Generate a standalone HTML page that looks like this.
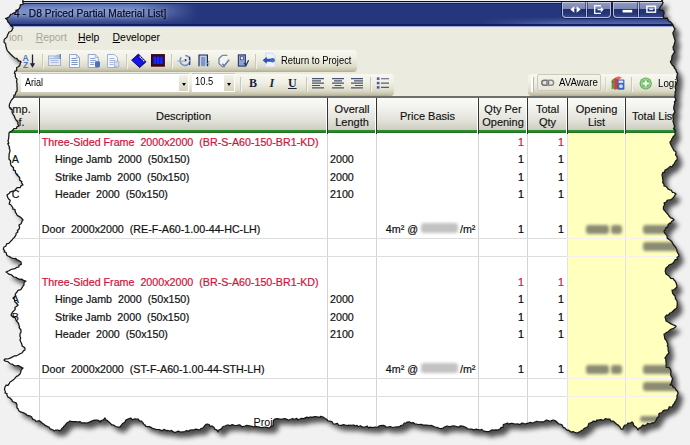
<!DOCTYPE html>
<html><head><meta charset="utf-8"><title>D8 Priced Partial Material List</title>
<style>
html,body{margin:0;padding:0}
body{width:690px;height:445px;overflow:hidden;background:#f1f1f1;position:relative;font-family:"Liberation Sans",Arial,sans-serif;color:#000}
#shadow,#edge{position:absolute;left:0;top:0;width:690px;height:445px;pointer-events:none}
#win{position:absolute;left:0;top:0;width:690px;height:445px;overflow:hidden;background:#fff;clip-path:polygon(23px 0px,22.7px 2.1px,23.5px 4px,21.7px 4.5px,20.5px 4.5px,20.3px 5.6px,19.5px 8.5px,17.0px 10.3px,16.0px 10.2px,16.0px 11.7px,14.2px 12.9px,12px 14px,10.7px 14.4px,9.0px 17.0px,7.2px 17.9px,5.5px 18.5px,7.1px 19.4px,8px 22px,9.5px 23.5px,9.6px 23.7px,11px 26px,12.7px 26.9px,13px 28px,12.1px 30.1px,10.8px 31.5px,9px 32px,7.8px 34.6px,6.9px 36.9px,6.8px 37.2px,4.3px 39.4px,4px 42px,5.7px 43.9px,5.8px 45.6px,6.3px 47.8px,7px 50px,8.3px 51.8px,10.4px 54.0px,12.2px 55.7px,14.1px 57.4px,15px 58px,16.8px 58.3px,18.7px 60.9px,20.3px 61.1px,21px 62px,20.4px 63.1px,19.7px 65.5px,18px 67px,16.6px 67.5px,16.7px 70.6px,15px 71px,14.4px 73.4px,15.3px 73.8px,15.3px 76.8px,16px 78px,17.0px 79.1px,16.5px 82px,17.0px 83.1px,17px 86px,17.1px 87.7px,17.1px 91.0px,16px 92px,15.2px 95.0px,14.0px 95.2px,13.5px 98px,12.7px 98.6px,10.9px 100.8px,10.7px 101.8px,9.5px 104px,9.2px 106.7px,10.4px 108.9px,12.2px 109.8px,12px 112px,12.9px 114.0px,14.3px 116.2px,15.1px 118.2px,16px 120px,17.9px 122.0px,17.9px 124.4px,19px 126px,16.8px 126.8px,16.6px 128.4px,14.1px 128.5px,12.2px 130.8px,9.7px 132.1px,9px 133px,9.0px 134.1px,8.8px 136.9px,8.6px 138.7px,8px 141px,8.8px 143.3px,7.8px 143.7px,9.6px 147.3px,9.1px 148.1px,10px 150px,9.9px 151.6px,9.2px 153.6px,9.0px 156.2px,9px 158px,9.1px 159.5px,10.5px 160.6px,10.6px 163.7px,11px 165px,11.6px 166.1px,13.6px 167.8px,13.4px 169.9px,15.4px 170.9px,15.6px 173.0px,17px 175px,18.7px 176.5px,19.7px 177.7px,19.7px 180.3px,21.8px 181.6px,21.5px 182.6px,23px 185px,21.3px 185.4px,20.1px 187.7px,17.1px 187.6px,16px 189px,14.8px 190.5px,13.0px 191.1px,9.9px 192.2px,9.4px 193.3px,7px 195px,7.5px 196.8px,8.4px 198.8px,10.2px 200.3px,9.2px 203.9px,11px 205px,12.8px 207.6px,12.9px 209.2px,14.9px 209.4px,15.5px 212.3px,16.3px 213.4px,17px 215px,18.1px 215.9px,19.5px 216.6px,21.7px 218.3px,23px 220px,22.3px 220.8px,21.1px 223.7px,19px 225px,19.6px 227.5px,19.3px 228.7px,17.3px 230.7px,18px 232px,16.1px 233.2px,15.9px 235.2px,14.2px 237.7px,13.4px 238.1px,12px 240px,9.9px 242.1px,8.8px 243.4px,6.9px 243.6px,5.7px 246.2px,4px 247px,3.3px 249.3px,4.8px 250.9px,4px 252px,6.0px 252.3px,6.9px 255.4px,8px 256px,9.0px 256.4px,11.3px 257.8px,13.4px 258.5px,16.0px 258.4px,16.4px 259.5px,18.4px 260.3px,21px 262px,21.3px 264.4px,18.8px 265.3px,19px 267px,16.8px 267.3px,15.0px 268.7px,13.6px 268.9px,11.0px 269.5px,9.0px 270.7px,8.3px 271.0px,6px 272px,6.8px 272.4px,8.9px 274.2px,11.4px 274.8px,13.0px 276.2px,14px 277px,15.9px 277.4px,18.0px 278.7px,19.8px 279.4px,21.9px 279.2px,24.1px 280.7px,26px 281px,24.1px 282.5px,23.9px 285.1px,23px 286px,22.4px 287.2px,20.8px 289.6px,18.0px 290.4px,17px 292px,15.2px 294.1px,15.3px 295.8px,14.6px 296.8px,13px 298px,14.7px 299.9px,14.7px 301.7px,15.8px 302.5px,18px 305px,17.4px 305.8px,14.9px 307.5px,15.3px 309.4px,12.4px 312.3px,11.4px 314.0px,11px 315px,12.6px 316.9px,14.4px 317.7px,15.3px 317.8px,16px 320px,17.5px 322.0px,18.4px 323.2px,19.5px 326.9px,19.1px 327.6px,21px 330px,20.9px 332.7px,20.1px 333.4px,19.9px 336.2px,20.7px 337.8px,20px 340px,20.7px 341.8px,21.7px 343.8px,22.2px 346.0px,24.9px 347.8px,25px 350px,23.7px 350.6px,21.9px 353.0px,20.1px 353.8px,18px 355px,16.0px 356.0px,14.8px 355.7px,11.2px 357.6px,10.8px 357.9px,7.9px 359.0px,5.4px 358.8px,4px 360px,5.4px 361.2px,7.6px 361.5px,10.4px 363.9px,12px 364px,13.4px 365.1px,15.5px 366.0px,17.7px 365.5px,18.8px 365.7px,21.1px 367.1px,23px 368px,21.3px 369.7px,20.6px 372.5px,20px 374px,17.8px 376.0px,17px 376px,15.6px 377.4px,14.1px 379.1px,13.4px 379.7px,11.4px 381.2px,10px 382px,9.5px 383.1px,8.0px 385.4px,6.2px 385.2px,5px 387px,4.5px 389.4px,5.4px 391.9px,5px 393px,7.0px 393.7px,6.9px 395.0px,8.1px 397.2px,10px 398px,12.1px 400.2px,12.3px 401.5px,13.8px 402.0px,16.1px 402.8px,17px 405px,16.9px 407.7px,17.9px 408.7px,19px 411px,20.9px 412.1px,21.5px 412.2px,24.1px 413.2px,26px 414px,27.2px 415.4px,30.5px 416.2px,31.5px 416.8px,32.7px 419.1px,35px 420px,36.0px 421.5px,39.3px 420.7px,41.1px 422.0px,42px 423px,44.3px 424.5px,45.1px 425.4px,47.6px 426.6px,49px 427px,50.2px 428.8px,53.3px 430.0px,54px 431px,55.8px 430.0px,57.5px 430.2px,59.7px 430.6px,61px 430px,62.1px 428.0px,63.3px 427.6px,64px 426px,64.9px 425.5px,67.3px 422.7px,69.4px 421.5px,70px 421px,71.7px 421.7px,74.2px 421.6px,76.3px 421.7px,78px 422px,79.9px 421.6px,81.6px 422.9px,85.3px 422.8px,87px 423px,89.5px 422.1px,90.5px 421.6px,93.7px 420.3px,95.0px 420.1px,97px 420px,99.0px 420.7px,100px 422px,101.3px 420.5px,103.4px 419.9px,105px 418px,106.1px 420.1px,107.0px 420.3px,108.4px 421.4px,111.2px 424.1px,112px 425px,113.4px 424.9px,115.8px 426.5px,118.6px 427.0px,120px 427px,121.8px 424.7px,123.0px 423.2px,124.9px 422.3px,125.8px 420.1px,128px 419px,130.6px 418.1px,132.6px 419.8px,134.9px 418.8px,136.1px 419.2px,138px 419px,139.7px 421.2px,141.2px 421.0px,142.9px 422.6px,143.8px 424.3px,145px 425px,146.0px 426.3px,149.3px 426.6px,151.0px 427.3px,152.4px 428.3px,155px 429px,156.2px 429.3px,159.6px 429.5px,161.6px 430.8px,164.4px 429.4px,166.3px 430.7px,167.0px 430.4px,170px 431px,171.5px 430.4px,174.1px 432.3px,175.6px 432.3px,178.4px 431.1px,180px 432px,182.7px 431.8px,184.9px 431.6px,186.5px 430.5px,188.6px 431.3px,190px 430px,192.7px 429.9px,194.5px 430.0px,195.2px 429.1px,197.2px 429.4px,200px 430px,200.7px 428.8px,203.2px 427.7px,204.0px 426.7px,205.2px 425.1px,207px 424px,209.2px 424.5px,209.7px 426.1px,212px 426px,213.9px 427.2px,214.7px 429.1px,216.7px 429.9px,218px 432px,218.4px 430.2px,221.4px 428.9px,222.1px 427.8px,223.0px 426.5px,225px 426px,226.8px 425.2px,228.1px 425.0px,230.3px 425.7px,232.1px 424.6px,235px 425.5px,236.9px 425.4px,239.4px 424.8px,240.8px 425.6px,242.1px 426.8px,245px 426px,246.7px 425.4px,249.4px 425.8px,252.0px 426.4px,254px 427px,255.2px 426.3px,258.5px 426.9px,260.6px 427.4px,262px 427.6px,264.9px 427.2px,265.5px 427.1px,268.6px 427.9px,270px 427.6px,271.0px 426.0px,272.6px 426px,273.2px 425.1px,273.3px 421.3px,273.4px 420.5px,274.7px 419.2px,277.1px 418.6px,280px 419px,281.1px 419.4px,284.8px 418.6px,286.9px 419.3px,288.6px 420.2px,290px 419.5px,292.9px 418.5px,293.6px 419.5px,296.9px 418.4px,297.6px 419.8px,300px 419px,301.2px 418.4px,303.7px 418.6px,306.9px 417.1px,308.5px 417.9px,310px 417px,312.7px 417.1px,314.8px 416.7px,315.8px 416.5px,318px 417px,320.2px 417.0px,320.9px 416.3px,323px 417px,325.1px 418.5px,326.8px 419.4px,328px 421px,329.7px 421.1px,331.9px 421.5px,333.2px 423.8px,335px 424px,337.4px 423.4px,338.5px 425.1px,341.3px 425.4px,343.7px 424.7px,345px 425px,347.8px 425.7px,348.7px 425.1px,350.1px 425.4px,353.9px 425.0px,355px 426px,357.1px 425.4px,358.2px 426.7px,360.5px 425.7px,362.3px 427.1px,365px 427px,367.2px 426.0px,368.5px 427.9px,370.4px 427.1px,372.8px 427.6px,375px 427px,377.2px 427.4px,379.1px 426.0px,380.4px 425.6px,383.7px 425.4px,385px 426px,386.0px 427.1px,388.4px 427.2px,390.2px 426.5px,392.4px 427.5px,395px 427px,397.2px 426.8px,399.5px 426.7px,400.7px 425.7px,403px 425px,404.2px 423.2px,406.3px 423.2px,407px 422px,409.6px 421.9px,411.1px 422.9px,413.5px 422.7px,415px 424px,416.7px 424.2px,418.1px 424.5px,421.5px 424.4px,423.3px 425.0px,425px 425px,426.4px 425.1px,430.0px 425.5px,430.9px 425.4px,432.4px 425.9px,435px 427px,437.9px 427.7px,439.7px 428.5px,441.2px 428.6px,443px 428px,445.1px 426.8px,447px 426px,449.9px 426.8px,451.9px 426.0px,453.5px 425.8px,455px 426px,458.0px 427.0px,458.6px 427.3px,460.4px 425.8px,463.4px 426.4px,465px 427px,466.7px 427.9px,467.4px 428.8px,470px 429px,471.6px 429.1px,473.7px 429.9px,476.5px 429.2px,477.2px 429.4px,480px 430px,481.8px 429.4px,483.3px 430.9px,486.4px 431.6px,489.0px 431.6px,490px 431px,491.7px 429.9px,493.6px 430.1px,496.1px 429.9px,497.7px 430.1px,500px 429px,500.8px 427.7px,503.3px 427.1px,503.3px 424.7px,505px 424px,507.6px 423.0px,508.3px 424.1px,511.1px 423.3px,512.1px 423.4px,515px 424px,517.5px 423.9px,520.0px 424.6px,522.0px 423.1px,522.4px 423.0px,525px 424px,526.9px 423.3px,528.1px 423.3px,530.2px 422.4px,532.5px 423.0px,535px 422px,536.8px 421.3px,538.1px 421.5px,541.3px 421.8px,543.8px 421.8px,545px 421px,546.5px 420.0px,549.5px 421.1px,551.0px 420.9px,553px 420px,554.9px 420.6px,555.8px 421.0px,558.5px 423.8px,560px 424px,562.2px 425.1px,563.1px 427.3px,564.8px 427.8px,565.4px 428.8px,567px 430px,568.3px 430.0px,571.4px 432.2px,573.1px 431.6px,574.7px 432.3px,577px 433px,579.6px 431.9px,581.9px 430.3px,583px 430px,584.0px 428.6px,585.6px 427.9px,587.9px 426.7px,588.8px 423.5px,590px 423px,591.9px 422.3px,593.5px 421.1px,595.7px 421.6px,597px 420px,598.2px 420.1px,600.7px 419.6px,603.8px 420.3px,605.3px 418.6px,607px 419px,609.8px 419.0px,610.8px 421.0px,613px 421px,614.0px 421.7px,616.7px 424.3px,616.8px 424.4px,618.2px 425.1px,620px 427px,621.0px 429.0px,623px 429px,623.4px 427.0px,624.9px 425.2px,626.8px 425.0px,628px 423px,630.3px 423.3px,632.0px 422.0px,633px 423px,633.8px 425.7px,634.6px 426.0px,636.7px 427.8px,638px 430px,639.3px 427.8px,640.0px 428.4px,641.0px 427.1px,643px 425px,644.1px 425.7px,646.8px 424.8px,647.5px 423.4px,650px 424px,652.2px 422.7px,652.7px 423.3px,655px 422px,656.7px 419.1px,657px 418px,658.9px 416.4px,658.8px 413.9px,660px 413px,661.5px 413.2px,663.1px 410.8px,664.5px 410.0px,667px 410px,668.2px 409.6px,669.2px 406.9px,672.4px 407.2px,673px 405px,675.0px 402.7px,674.7px 402.4px,676.0px 400.2px,677px 398px,677.0px 395.4px,677.4px 395.2px,678px 393px,677.6px 391.5px,675.9px 389.7px,675px 388px,673.2px 387.1px,672.3px 385.4px,670px 385px,670.9px 384.2px,672.0px 381.0px,672px 380px,672.7px 378.7px,670.8px 375.5px,670.7px 373.1px,671px 372px,670.7px 370.1px,669.2px 367.7px,666.3px 367.5px,666px 365px,666.3px 364.2px,665.9px 361.6px,665.8px 358.9px,665px 358px,666.4px 356.2px,667.0px 354.9px,669px 353px,668.3px 351.0px,668.1px 348.6px,668px 347px,667.2px 345.5px,668.0px 344.4px,667.2px 342.4px,666px 340px,664.9px 339.0px,664.2px 335.2px,664px 334px,665.5px 333.5px,666.7px 332.3px,668.1px 331.9px,670px 330px,671.4px 329.0px,673.1px 328.7px,675.5px 327.1px,676px 326px,673.9px 325.2px,671.1px 323.9px,670.7px 323.6px,668px 322px,666.1px 321.0px,665.8px 319.6px,665px 317px,666.4px 315.1px,668.4px 315.1px,670px 313px,671.6px 312.5px,673.9px 310.2px,674.9px 309.3px,677px 308px,676.8px 306.0px,677.3px 305.3px,677.2px 302.0px,677px 301px,675.4px 298.7px,675.2px 296.3px,674px 295px,672.5px 293.0px,672.2px 290.7px,672px 290px,673.7px 289.8px,675.4px 288.5px,677px 287px,676.9px 285.9px,676.3px 283.4px,675.1px 281.0px,674px 280px,673.2px 278.6px,670.8px 278.4px,668.8px 275.8px,668.2px 275.4px,666px 274px,665.2px 271.1px,665.7px 269.0px,666px 268px,668.3px 266.2px,668.7px 265.4px,670.8px 264.3px,672.7px 263.5px,674px 262px,675.1px 259.7px,677.5px 259.4px,676.9px 257.4px,679px 256px,678.8px 255.0px,676.8px 251.0px,677px 250px,676.0px 248.2px,675.8px 247.5px,673.7px 245.0px,673.2px 244.4px,672px 242px,670.2px 240.3px,668.7px 239.3px,667.3px 238.4px,667px 236px,666.0px 234.5px,664.2px 232.1px,664px 231px,664.9px 230.2px,666.1px 227.6px,668.0px 226.8px,668px 225px,669.6px 223.2px,670.6px 223.3px,671.8px 221.3px,674px 220px,672.6px 218.4px,671.2px 218.2px,669px 216px,668.5px 215.0px,665.9px 212.1px,665.1px 211.1px,664px 210px,663.4px 209.0px,663.4px 207.1px,664.9px 204.0px,664px 203px,666.6px 201.8px,667.0px 200.4px,668.5px 200.0px,671.0px 199.7px,673px 198px,674.7px 195.8px,674.8px 195.1px,676px 194px,673.9px 192.5px,672.5px 192.4px,671.2px 190.2px,670px 190px,667.9px 188.9px,667.1px 187.5px,665.9px 186.4px,664px 186px,664.0px 184.2px,662.7px 182.5px,663px 180px,662.5px 178.4px,662.5px 176.9px,662px 175px,662.9px 172.4px,664.6px 172.4px,665px 170px,666.6px 169.2px,667.7px 168.8px,670.2px 166.4px,672.0px 167.0px,673px 165px,674.0px 164.3px,675.6px 161.0px,677px 160px,677.2px 157.9px,677.0px 156.7px,675.5px 154.8px,676px 153px,675.7px 151.5px,674.1px 150.7px,672.9px 148.5px,672px 147px,671.5px 146.0px,670.1px 142.9px,670px 142px,671.5px 140.4px,671.6px 139.5px,673px 137px,674.4px 135.4px,675.3px 134.3px,675px 132px,675.2px 129.8px,673.5px 128.9px,674.7px 126.5px,674px 125px,673.7px 123.1px,673.0px 121.4px,673.4px 118.8px,673px 117px,672.9px 115.4px,674.0px 114.1px,675px 112px,674.0px 109.8px,673.7px 107.8px,674px 106px,674.8px 103.2px,674.4px 102.0px,676px 100px,675.2px 98.0px,674.8px 95.2px,675.3px 94.8px,675px 92px,676.0px 90.3px,675.3px 87.6px,675.3px 86.4px,676px 85px,677.1px 82.0px,677.4px 80.5px,676.6px 77.8px,677px 76px,677.6px 73.4px,676.5px 72.0px,676px 70px,674.1px 67.7px,674.5px 67.1px,672.7px 65.6px,671px 63px,670.4px 61.7px,672.0px 59.0px,671.7px 58.7px,672px 56px,672.7px 55.2px,673.3px 53.7px,675px 52px,673.9px 50.4px,673.4px 49.4px,673px 47px,674.0px 45.3px,674.4px 43.4px,675.1px 41.3px,675px 40px,674.4px 38.2px,673.4px 35.1px,673px 34px,673.0px 32.6px,673.8px 31.2px,675px 29px,674.0px 27.9px,673px 25px,672.4px 24.2px,670.2px 21.6px,669.4px 21.7px,668px 20px,667.2px 18.1px,664.0px 18.3px,663px 16px,664.0px 14.0px,664px 12px,662.8px 10.3px,660.8px 10.3px,659px 9px,660.2px 7.0px,660.3px 6.6px,662px 5px,663.1px 2.6px,661.7px 0.8px,663px 0px)}
.abs{position:absolute}
.t{position:absolute;white-space:pre;line-height:1}
/* title bar */
#title{position:absolute;left:0;top:0;width:690px;height:27px;background:#25367c;overflow:hidden}
#title .glow{position:absolute;left:-30px;top:2.5px;width:228px;height:16px;background:linear-gradient(90deg,#a8c0f2 0,#a8c0f2 72%,rgba(168,192,242,.55) 86%,rgba(168,192,242,0) 100%);opacity:.68;filter:blur(4.5px);border-radius:8px}
#title .ln{position:absolute;left:0;width:690px}
.ttext{left:14.2px;top:8.3px;font-size:10.6px;color:#050a26;-webkit-text-stroke:.25px #050a26;transform:scaleX(.965);transform-origin:0 0;text-shadow:0 0 3px rgba(255,255,255,.55)}
.wb{position:absolute;top:2px;height:15.4px;border:1px solid #b4bcda;border-top:none;border-radius:0 0 4px 4px;background:linear-gradient(#c5cbe2 0,#c5cbe2 4%,#8e98c0 6%,#7c88b4 45%,#22316f 50%,#26367a 80%,#3a4a8c 100%);box-shadow:0 0 0 1px rgba(15,20,60,.7)}
.wb i{position:absolute;top:0;width:1px;height:15.4px;background:#b4bcda;box-shadow:1px 0 0 rgba(15,20,60,.5),-1px 0 0 rgba(15,20,60,.5)}
/* menu */
#menu{position:absolute;left:0;top:27px;width:690px;height:23px;background:#ecebdf}
.m{font-size:10.4px;top:6.4px}
.m u{text-decoration:underline;text-underline-offset:1px}
/* toolbars */
#tbarea{position:absolute;left:0;top:50px;width:690px;height:47px;background:#ecebdf}
.tb{position:absolute;height:22px;background:linear-gradient(#f8f8f1 0,#f0efe4 40%,#dddbc8 76%,#c6c4ac 91%,#aeac91 100%);border-radius:0 4px 4px 0}
.nar{transform-origin:0 0}
.sep{position:absolute;width:1px;background:#cac8b8;box-shadow:1px 0 0 #f3f2ea}
/* grid */
#hdr{position:absolute;left:0;top:97px;width:690px;height:36.5px;background:linear-gradient(#fbfbf8 0,#f2f2ed 30%,#e3e3db 62%,#cdcdc2 88%,#b9b9ad 100%)}
#hdr .topl{position:absolute;left:0;top:-1.5px;width:690px;height:2px;background:#6e6e6a}
#hdr .grn{position:absolute;left:0;top:33.4px;width:690px;height:3.1px;background:linear-gradient(#2f8f2f 0,#2b852b 65%,#1d611d 100%)}
#hdr .v{position:absolute;top:.5px;width:1px;height:36px;z-index:2;background:#333;box-shadow:-1px 0 0 #fff}
.h{position:absolute;text-align:center;font-size:11px;line-height:12.8px;color:#111;-webkit-text-stroke:.15px currentColor}
#body{position:absolute;left:0;top:133px;width:690px;height:312px;background:#fff}
#yel{position:absolute;left:567px;top:0;width:123px;height:312px;background:#ffffbe}
.vl{position:absolute;top:0;width:1px;height:312px;background:#d4d4d4}
.hl{position:absolute;left:0;width:567px;height:1px;background:#dedede}
.hly{position:absolute;left:567px;width:123px;height:1px;background:#f3f0ee}
.r{font-size:10.7px;color:#111;-webkit-text-stroke:.2px currentColor}
.red{color:#d4103a}
.num{position:absolute;white-space:pre;line-height:1;font-size:10.7px;text-align:right;-webkit-text-stroke:.2px currentColor}
.blur{position:absolute;background:#8b8b74;filter:blur(1.8px);border-radius:3px}
</style></head>
<body>
<svg id="shadow" viewBox="0 0 690 445"><defs><filter id="bl" x="-5%" y="-5%" width="112%" height="112%"><feGaussianBlur stdDeviation="2.6"/></filter></defs>
<polygon points="23,0 22.7,2.1 23.5,4 21.7,4.5 20.5,4.5 20.3,5.6 19.5,8.5 17.0,10.3 16.0,10.2 16.0,11.7 14.2,12.9 12,14 10.7,14.4 9.0,17.0 7.2,17.9 5.5,18.5 7.1,19.4 8,22 9.5,23.5 9.6,23.7 11,26 12.7,26.9 13,28 12.1,30.1 10.8,31.5 9,32 7.8,34.6 6.9,36.9 6.8,37.2 4.3,39.4 4,42 5.7,43.9 5.8,45.6 6.3,47.8 7,50 8.3,51.8 10.4,54.0 12.2,55.7 14.1,57.4 15,58 16.8,58.3 18.7,60.9 20.3,61.1 21,62 20.4,63.1 19.7,65.5 18,67 16.6,67.5 16.7,70.6 15,71 14.4,73.4 15.3,73.8 15.3,76.8 16,78 17.0,79.1 16.5,82 17.0,83.1 17,86 17.1,87.7 17.1,91.0 16,92 15.2,95.0 14.0,95.2 13.5,98 12.7,98.6 10.9,100.8 10.7,101.8 9.5,104 9.2,106.7 10.4,108.9 12.2,109.8 12,112 12.9,114.0 14.3,116.2 15.1,118.2 16,120 17.9,122.0 17.9,124.4 19,126 16.8,126.8 16.6,128.4 14.1,128.5 12.2,130.8 9.7,132.1 9,133 9.0,134.1 8.8,136.9 8.6,138.7 8,141 8.8,143.3 7.8,143.7 9.6,147.3 9.1,148.1 10,150 9.9,151.6 9.2,153.6 9.0,156.2 9,158 9.1,159.5 10.5,160.6 10.6,163.7 11,165 11.6,166.1 13.6,167.8 13.4,169.9 15.4,170.9 15.6,173.0 17,175 18.7,176.5 19.7,177.7 19.7,180.3 21.8,181.6 21.5,182.6 23,185 21.3,185.4 20.1,187.7 17.1,187.6 16,189 14.8,190.5 13.0,191.1 9.9,192.2 9.4,193.3 7,195 7.5,196.8 8.4,198.8 10.2,200.3 9.2,203.9 11,205 12.8,207.6 12.9,209.2 14.9,209.4 15.5,212.3 16.3,213.4 17,215 18.1,215.9 19.5,216.6 21.7,218.3 23,220 22.3,220.8 21.1,223.7 19,225 19.6,227.5 19.3,228.7 17.3,230.7 18,232 16.1,233.2 15.9,235.2 14.2,237.7 13.4,238.1 12,240 9.9,242.1 8.8,243.4 6.9,243.6 5.7,246.2 4,247 3.3,249.3 4.8,250.9 4,252 6.0,252.3 6.9,255.4 8,256 9.0,256.4 11.3,257.8 13.4,258.5 16.0,258.4 16.4,259.5 18.4,260.3 21,262 21.3,264.4 18.8,265.3 19,267 16.8,267.3 15.0,268.7 13.6,268.9 11.0,269.5 9.0,270.7 8.3,271.0 6,272 6.8,272.4 8.9,274.2 11.4,274.8 13.0,276.2 14,277 15.9,277.4 18.0,278.7 19.8,279.4 21.9,279.2 24.1,280.7 26,281 24.1,282.5 23.9,285.1 23,286 22.4,287.2 20.8,289.6 18.0,290.4 17,292 15.2,294.1 15.3,295.8 14.6,296.8 13,298 14.7,299.9 14.7,301.7 15.8,302.5 18,305 17.4,305.8 14.9,307.5 15.3,309.4 12.4,312.3 11.4,314.0 11,315 12.6,316.9 14.4,317.7 15.3,317.8 16,320 17.5,322.0 18.4,323.2 19.5,326.9 19.1,327.6 21,330 20.9,332.7 20.1,333.4 19.9,336.2 20.7,337.8 20,340 20.7,341.8 21.7,343.8 22.2,346.0 24.9,347.8 25,350 23.7,350.6 21.9,353.0 20.1,353.8 18,355 16.0,356.0 14.8,355.7 11.2,357.6 10.8,357.9 7.9,359.0 5.4,358.8 4,360 5.4,361.2 7.6,361.5 10.4,363.9 12,364 13.4,365.1 15.5,366.0 17.7,365.5 18.8,365.7 21.1,367.1 23,368 21.3,369.7 20.6,372.5 20,374 17.8,376.0 17,376 15.6,377.4 14.1,379.1 13.4,379.7 11.4,381.2 10,382 9.5,383.1 8.0,385.4 6.2,385.2 5,387 4.5,389.4 5.4,391.9 5,393 7.0,393.7 6.9,395.0 8.1,397.2 10,398 12.1,400.2 12.3,401.5 13.8,402.0 16.1,402.8 17,405 16.9,407.7 17.9,408.7 19,411 20.9,412.1 21.5,412.2 24.1,413.2 26,414 27.2,415.4 30.5,416.2 31.5,416.8 32.7,419.1 35,420 36.0,421.5 39.3,420.7 41.1,422.0 42,423 44.3,424.5 45.1,425.4 47.6,426.6 49,427 50.2,428.8 53.3,430.0 54,431 55.8,430.0 57.5,430.2 59.7,430.6 61,430 62.1,428.0 63.3,427.6 64,426 64.9,425.5 67.3,422.7 69.4,421.5 70,421 71.7,421.7 74.2,421.6 76.3,421.7 78,422 79.9,421.6 81.6,422.9 85.3,422.8 87,423 89.5,422.1 90.5,421.6 93.7,420.3 95.0,420.1 97,420 99.0,420.7 100,422 101.3,420.5 103.4,419.9 105,418 106.1,420.1 107.0,420.3 108.4,421.4 111.2,424.1 112,425 113.4,424.9 115.8,426.5 118.6,427.0 120,427 121.8,424.7 123.0,423.2 124.9,422.3 125.8,420.1 128,419 130.6,418.1 132.6,419.8 134.9,418.8 136.1,419.2 138,419 139.7,421.2 141.2,421.0 142.9,422.6 143.8,424.3 145,425 146.0,426.3 149.3,426.6 151.0,427.3 152.4,428.3 155,429 156.2,429.3 159.6,429.5 161.6,430.8 164.4,429.4 166.3,430.7 167.0,430.4 170,431 171.5,430.4 174.1,432.3 175.6,432.3 178.4,431.1 180,432 182.7,431.8 184.9,431.6 186.5,430.5 188.6,431.3 190,430 192.7,429.9 194.5,430.0 195.2,429.1 197.2,429.4 200,430 200.7,428.8 203.2,427.7 204.0,426.7 205.2,425.1 207,424 209.2,424.5 209.7,426.1 212,426 213.9,427.2 214.7,429.1 216.7,429.9 218,432 218.4,430.2 221.4,428.9 222.1,427.8 223.0,426.5 225,426 226.8,425.2 228.1,425.0 230.3,425.7 232.1,424.6 235,425.5 236.9,425.4 239.4,424.8 240.8,425.6 242.1,426.8 245,426 246.7,425.4 249.4,425.8 252.0,426.4 254,427 255.2,426.3 258.5,426.9 260.6,427.4 262,427.6 264.9,427.2 265.5,427.1 268.6,427.9 270,427.6 271.0,426.0 272.6,426 273.2,425.1 273.3,421.3 273.4,420.5 274.7,419.2 277.1,418.6 280,419 281.1,419.4 284.8,418.6 286.9,419.3 288.6,420.2 290,419.5 292.9,418.5 293.6,419.5 296.9,418.4 297.6,419.8 300,419 301.2,418.4 303.7,418.6 306.9,417.1 308.5,417.9 310,417 312.7,417.1 314.8,416.7 315.8,416.5 318,417 320.2,417.0 320.9,416.3 323,417 325.1,418.5 326.8,419.4 328,421 329.7,421.1 331.9,421.5 333.2,423.8 335,424 337.4,423.4 338.5,425.1 341.3,425.4 343.7,424.7 345,425 347.8,425.7 348.7,425.1 350.1,425.4 353.9,425.0 355,426 357.1,425.4 358.2,426.7 360.5,425.7 362.3,427.1 365,427 367.2,426.0 368.5,427.9 370.4,427.1 372.8,427.6 375,427 377.2,427.4 379.1,426.0 380.4,425.6 383.7,425.4 385,426 386.0,427.1 388.4,427.2 390.2,426.5 392.4,427.5 395,427 397.2,426.8 399.5,426.7 400.7,425.7 403,425 404.2,423.2 406.3,423.2 407,422 409.6,421.9 411.1,422.9 413.5,422.7 415,424 416.7,424.2 418.1,424.5 421.5,424.4 423.3,425.0 425,425 426.4,425.1 430.0,425.5 430.9,425.4 432.4,425.9 435,427 437.9,427.7 439.7,428.5 441.2,428.6 443,428 445.1,426.8 447,426 449.9,426.8 451.9,426.0 453.5,425.8 455,426 458.0,427.0 458.6,427.3 460.4,425.8 463.4,426.4 465,427 466.7,427.9 467.4,428.8 470,429 471.6,429.1 473.7,429.9 476.5,429.2 477.2,429.4 480,430 481.8,429.4 483.3,430.9 486.4,431.6 489.0,431.6 490,431 491.7,429.9 493.6,430.1 496.1,429.9 497.7,430.1 500,429 500.8,427.7 503.3,427.1 503.3,424.7 505,424 507.6,423.0 508.3,424.1 511.1,423.3 512.1,423.4 515,424 517.5,423.9 520.0,424.6 522.0,423.1 522.4,423.0 525,424 526.9,423.3 528.1,423.3 530.2,422.4 532.5,423.0 535,422 536.8,421.3 538.1,421.5 541.3,421.8 543.8,421.8 545,421 546.5,420.0 549.5,421.1 551.0,420.9 553,420 554.9,420.6 555.8,421.0 558.5,423.8 560,424 562.2,425.1 563.1,427.3 564.8,427.8 565.4,428.8 567,430 568.3,430.0 571.4,432.2 573.1,431.6 574.7,432.3 577,433 579.6,431.9 581.9,430.3 583,430 584.0,428.6 585.6,427.9 587.9,426.7 588.8,423.5 590,423 591.9,422.3 593.5,421.1 595.7,421.6 597,420 598.2,420.1 600.7,419.6 603.8,420.3 605.3,418.6 607,419 609.8,419.0 610.8,421.0 613,421 614.0,421.7 616.7,424.3 616.8,424.4 618.2,425.1 620,427 621.0,429.0 623,429 623.4,427.0 624.9,425.2 626.8,425.0 628,423 630.3,423.3 632.0,422.0 633,423 633.8,425.7 634.6,426.0 636.7,427.8 638,430 639.3,427.8 640.0,428.4 641.0,427.1 643,425 644.1,425.7 646.8,424.8 647.5,423.4 650,424 652.2,422.7 652.7,423.3 655,422 656.7,419.1 657,418 658.9,416.4 658.8,413.9 660,413 661.5,413.2 663.1,410.8 664.5,410.0 667,410 668.2,409.6 669.2,406.9 672.4,407.2 673,405 675.0,402.7 674.7,402.4 676.0,400.2 677,398 677.0,395.4 677.4,395.2 678,393 677.6,391.5 675.9,389.7 675,388 673.2,387.1 672.3,385.4 670,385 670.9,384.2 672.0,381.0 672,380 672.7,378.7 670.8,375.5 670.7,373.1 671,372 670.7,370.1 669.2,367.7 666.3,367.5 666,365 666.3,364.2 665.9,361.6 665.8,358.9 665,358 666.4,356.2 667.0,354.9 669,353 668.3,351.0 668.1,348.6 668,347 667.2,345.5 668.0,344.4 667.2,342.4 666,340 664.9,339.0 664.2,335.2 664,334 665.5,333.5 666.7,332.3 668.1,331.9 670,330 671.4,329.0 673.1,328.7 675.5,327.1 676,326 673.9,325.2 671.1,323.9 670.7,323.6 668,322 666.1,321.0 665.8,319.6 665,317 666.4,315.1 668.4,315.1 670,313 671.6,312.5 673.9,310.2 674.9,309.3 677,308 676.8,306.0 677.3,305.3 677.2,302.0 677,301 675.4,298.7 675.2,296.3 674,295 672.5,293.0 672.2,290.7 672,290 673.7,289.8 675.4,288.5 677,287 676.9,285.9 676.3,283.4 675.1,281.0 674,280 673.2,278.6 670.8,278.4 668.8,275.8 668.2,275.4 666,274 665.2,271.1 665.7,269.0 666,268 668.3,266.2 668.7,265.4 670.8,264.3 672.7,263.5 674,262 675.1,259.7 677.5,259.4 676.9,257.4 679,256 678.8,255.0 676.8,251.0 677,250 676.0,248.2 675.8,247.5 673.7,245.0 673.2,244.4 672,242 670.2,240.3 668.7,239.3 667.3,238.4 667,236 666.0,234.5 664.2,232.1 664,231 664.9,230.2 666.1,227.6 668.0,226.8 668,225 669.6,223.2 670.6,223.3 671.8,221.3 674,220 672.6,218.4 671.2,218.2 669,216 668.5,215.0 665.9,212.1 665.1,211.1 664,210 663.4,209.0 663.4,207.1 664.9,204.0 664,203 666.6,201.8 667.0,200.4 668.5,200.0 671.0,199.7 673,198 674.7,195.8 674.8,195.1 676,194 673.9,192.5 672.5,192.4 671.2,190.2 670,190 667.9,188.9 667.1,187.5 665.9,186.4 664,186 664.0,184.2 662.7,182.5 663,180 662.5,178.4 662.5,176.9 662,175 662.9,172.4 664.6,172.4 665,170 666.6,169.2 667.7,168.8 670.2,166.4 672.0,167.0 673,165 674.0,164.3 675.6,161.0 677,160 677.2,157.9 677.0,156.7 675.5,154.8 676,153 675.7,151.5 674.1,150.7 672.9,148.5 672,147 671.5,146.0 670.1,142.9 670,142 671.5,140.4 671.6,139.5 673,137 674.4,135.4 675.3,134.3 675,132 675.2,129.8 673.5,128.9 674.7,126.5 674,125 673.7,123.1 673.0,121.4 673.4,118.8 673,117 672.9,115.4 674.0,114.1 675,112 674.0,109.8 673.7,107.8 674,106 674.8,103.2 674.4,102.0 676,100 675.2,98.0 674.8,95.2 675.3,94.8 675,92 676.0,90.3 675.3,87.6 675.3,86.4 676,85 677.1,82.0 677.4,80.5 676.6,77.8 677,76 677.6,73.4 676.5,72.0 676,70 674.1,67.7 674.5,67.1 672.7,65.6 671,63 670.4,61.7 672.0,59.0 671.7,58.7 672,56 672.7,55.2 673.3,53.7 675,52 673.9,50.4 673.4,49.4 673,47 674.0,45.3 674.4,43.4 675.1,41.3 675,40 674.4,38.2 673.4,35.1 673,34 673.0,32.6 673.8,31.2 675,29 674.0,27.9 673,25 672.4,24.2 670.2,21.6 669.4,21.7 668,20 667.2,18.1 664.0,18.3 663,16 664.0,14.0 664,12 662.8,10.3 660.8,10.3 659,9 660.2,7.0 660.3,6.6 662,5 663.1,2.6 661.7,0.8 663,0" fill="#000" opacity=".68" filter="url(#bl)" transform="translate(5,5.5)"/></svg>
<div id="win">
  <div id="title"><div class="glow"></div><div class="abs" style="left:480px;top:17px;width:210px;height:8px;background:linear-gradient(rgba(110,130,200,0),rgba(110,130,200,.75));-webkit-mask-image:linear-gradient(90deg,transparent 0,#000 40%);mask-image:linear-gradient(90deg,transparent 0,#000 40%)"></div><div class="ln" style="top:0;height:1px;background:#f4f4f4"></div><div class="ln" style="top:1px;height:.8px;background:#0d0d12"></div><div class="ln" style="top:1.8px;height:.9px;background:#aebad8"></div><div class="ln" style="top:2.7px;height:.7px;background:#17216b"></div><div class="ln" style="top:24.4px;height:1.2px;background:#151d63"></div><div class="ln" style="top:25.6px;height:.9px;background:#9aa8d0"></div><div class="ln" style="top:26.5px;height:.5px;background:#59638f"></div>
    <div class="t ttext">4 - D8 Priced Partial Material List]</div>
    <div class="wb" style="left:562px;width:47px"><i style="left:23px"></i>
      <svg class="abs" style="left:0;top:-.6px" width="48" height="17" viewBox="0 0 48 17"><path d="M11.3 5.2v6.6l-4-3.3zM13.6 5.2v6.6l4-3.3z" fill="#fff"/><path d="M38 4.8h-6.3v7.6H38" fill="none" stroke="#f4f4f8" stroke-width="1.4"/><path d="M34.5 8.6h4.6M37.8 6.7l2 1.9-2 1.9" fill="none" stroke="#f4f4f8" stroke-width="1.3"/></svg></div>
    <div class="wb" style="left:613px;width:60px"><i style="left:24px"></i>
      <svg class="abs" style="left:0;top:-.6px" width="60" height="17" viewBox="0 0 60 17"><rect x="8.6" y="8.9" width="9.6" height="2.6" fill="#fff"/><rect x="32.9" y="5.2" width="8.6" height="6" fill="none" stroke="#fff" stroke-width="1.4"/><rect x="35.2" y="7.3" width="4" height="1.8" fill="#cfd6ee"/></svg></div>
  </div>
  <div id="menu">
    <div class="t m" style="left:9px;color:#a8a69a">ion</div>
    <div class="t m" style="left:35.7px;color:#a8a69a"><u>R</u>eport</div>
    <div class="t m" style="left:78px"><u>H</u>elp</div>
    <div class="t m" style="left:112.6px"><u>D</u>eveloper</div>
  </div>
  <div id="tbarea">
    <div class="tb" style="left:0;top:0;width:357px"></div>
    <div class="tb" style="left:0;top:23.5px;width:394px"></div>
    <div class="tb" style="left:528px;top:23.5px;width:170px;border-radius:4px 0 0 4px"></div>
    <svg class="abs" style="left:0;top:0;z-index:3" width="690" height="47" viewBox="0 50 690 47">
      <!-- AZ sort -->
      <text x="22.6" y="60.7" font-family="Liberation Sans, sans-serif" font-size="8.6" font-weight="bold" fill="#5575c2">A</text>
      <text x="23" y="67.6" font-family="Liberation Sans, sans-serif" font-size="8.6" font-weight="bold" fill="#5575c2">Z</text>
      <path d="M32.5 54.6V65" stroke="#1c2540" stroke-width="1.3"/><path d="M29.8 63.2h5.4l-2.7 4.6z" fill="#1c2540"/>
      <!-- properties (greyed) -->
      <rect x="48.5" y="56" width="12" height="9.5" fill="#e4eaf5" stroke="#9fb2d6"/><path d="M48.5 58.5h12M50.5 60.5h8M50.5 62.5h8" stroke="#a9bada" stroke-width="1"/><path d="M53 57.5l4-3 4 .5v3z" fill="#a8bbdf"/><rect x="59.5" y="54" width="1.5" height="5" fill="#6e86bd"/>
      <!-- page -->
      <g id="pg"><path d="M69.5 54.5h7l3 3V67.5h-10z" fill="#f4f6fc" stroke="#93a7cf" stroke-width="1"/><path d="M76.5 54.5v3h3" fill="none" stroke="#93a7cf" stroke-width=".8"/><path d="M71.5 58.5h5M71.5 60.5h6M71.5 62.5h6M71.5 64.5h6" stroke="#7d94c6" stroke-width="1"/></g>
      <g transform="translate(18.7,0)"><path d="M69.5 54.5h7l3 3V67.5h-10z" fill="#f4f6fc" stroke="#93a7cf" stroke-width="1"/><path d="M76.5 54.5v3h3" fill="none" stroke="#93a7cf" stroke-width=".8"/><path d="M71.5 58.5h5M71.5 60.5h6M71.5 62.5h4M71.5 64.5h4" stroke="#8ea3cc" stroke-width="1"/><rect x="76.3" y="61.3" width="5" height="6" rx="1.2" fill="#4f6fb6"/></g>
      <g transform="translate(38,0)"><path d="M69.5 54.5h7l3 3V67.5h-10z" fill="#f4f6fc" stroke="#9fb0d4" stroke-width="1"/><path d="M71.5 58.5h5M71.5 60.5h6M71.5 62.5h4M71.5 64.5h4" stroke="#a4b5d6" stroke-width="1"/><rect x="76.3" y="61.8" width="4.6" height="5" fill="#d5deef" stroke="#9fb0d4" stroke-width=".8"/></g>
      <!-- blue diamond -->
      <path d="M138.4 54.1l7.6 7.7-6.3 5.7-8-7.3z" fill="#1414ee" stroke="#0a0a55" stroke-width="1" stroke-linejoin="round"/><path d="M139.6 56.6l4.6 4.8" stroke="#fff" stroke-width="1.3" stroke-dasharray="1.6 .9"/><path d="M137.3 55.6l7 7.2-5.2 4.4" fill="none" stroke="#0a0a55" stroke-width=".8"/>
      <!-- maroon square with bars -->
      <rect x="151" y="54.1" width="13.9" height="12.6" fill="#36000a"/><rect x="152.6" y="55.8" width="10.8" height="9.2" fill="none" stroke="#4c0a14" stroke-width=".8"/><rect x="153.3" y="56.6" width="9.6" height="7.5" fill="#1010a8"/><rect x="153.6" y="56.6" width="2.5" height="7.5" fill="#1428ff"/><rect x="156.9" y="56.6" width="2.5" height="7.5" fill="#1428ff"/><rect x="160.2" y="56.6" width="2.5" height="7.5" fill="#1428ff"/>
      <!-- globe-ish -->
      <path d="M181.2 57.2a5 5 0 1 0 4-1.8" fill="none" stroke="#6f8ec6" stroke-width="1.5"/><path d="M177.4 61.2h9" stroke="#8fb0e2" stroke-width="1.3"/><circle cx="185.6" cy="60" r="1" fill="#27355f"/><path d="M189.6 56.8v3.2M189.6 61.6v3.4" stroke="#2d3c6a" stroke-width="1.4"/>
      <!-- door frame -->
      <path d="M199 66.2V55h8.4V66.2" fill="#c3cfe8" stroke="#1d2b52" stroke-width="1.15"/><rect x="201.1" y="57" width="4.2" height="9.2" fill="#7f97c8"/><path d="M208.8 61v5.4" stroke="#5d74a8" stroke-width="1" stroke-dasharray="1.4 1"/><path d="M206 63.5h3" stroke="#8da2cc" stroke-width=".8"/>
      <!-- refresh/check octagon -->
      <path d="M227.4 55.4h-5.2l-3.2 3v5.2l3.2 3h2.6" fill="#f3f4f8" stroke="#7a88a8" stroke-width="1.4" stroke-linejoin="round"/><path d="M222.4 63.8l1.8 2 5-6.2" fill="none" stroke="#6b7897" stroke-width="1.5"/>
      <!-- door with check -->
      <rect x="238.4" y="54.9" width="7" height="11.2" fill="#8ea4d4" stroke="#34446f" stroke-width="1.2"/><rect x="240.6" y="56.8" width="3" height="3" fill="#eef1f8" stroke="#34446f" stroke-width=".7"/><path d="M244.2 63l1.9 2.4 2.5-5.2" stroke="#273660" stroke-width="1.3" fill="none"/>
      <!-- return -->
      <path d="M265.5 53h6.5l3.2 3.2V67h-9.7z" fill="#eef1f8" stroke="#d0d6e4" stroke-width=".8"/><path d="M262.6 60.2l4.2-3.4v2h7.6v3h-7.6v2z" fill="#2a55b4"/><circle cx="272.5" cy="60.3" r="2.2" fill="#3f6cc8"/>
      <!-- align icons -->
      <path d="M312 78.6h12M312 80.9h9M312 83.2h12M312 85.5h8M312 87.8h12" stroke="#48546f" stroke-width="1.2"/>
      <path d="M332 78.6h12M334 80.9h8M332 83.2h12M334.5 85.5h7M332 87.8h12" stroke="#48546f" stroke-width="1.2"/>
      <path d="M351 78.6h12M354 80.9h9M351 83.2h12M355 85.5h8M351 87.8h12" stroke="#48546f" stroke-width="1.2"/>
      <!-- list -->
      <rect x="376.8" y="77.4" width="2.7" height="2.5" fill="#4c5a9c"/><rect x="376.8" y="81.8" width="2.7" height="2.5" fill="#4c5a9c"/><rect x="376.8" y="86.1" width="2.7" height="2.5" fill="#4c5a9c"/>
      <path d="M381 78.7h8M381 83.1h8M381 87.4h8" stroke="#525c76" stroke-width="1.1"/>
      <!-- link -->
      <rect x="541.8" y="80.3" width="6.8" height="5" rx="2.5" fill="#e4e4dc" stroke="#737373" stroke-width="1.5"/><rect x="546.8" y="80.3" width="6.8" height="5" rx="2.5" fill="none" stroke="#8a8a8a" stroke-width="1.5"/>
      <!-- books -->
      <path d="M611.6 80.2l3-2.2v10.6l-3 .6z" fill="#4fa246"/><path d="M614.2 78.2l4.6-1.6v12.2l-4.6 1z" fill="#d23c36"/><path d="M614.2 78.2l4.6-1.6 3.6 1.2-4.4 1.6z" fill="#e8645c"/><rect x="617.4" y="79.4" width="7" height="10.3" rx=".7" fill="#4261be"/><rect x="618.6" y="80.6" width="4.6" height="2.2" fill="#e6ebf8"/><circle cx="621" cy="86.2" r="1.9" fill="#bfe0f2"/><circle cx="612.6" cy="82" r="1" fill="#d8322c"/>
      <!-- green plus -->
      <circle cx="645.7" cy="83.5" r="6.1" fill="#5db052"/><circle cx="645.7" cy="83.5" r="5" fill="#aedca6"/><circle cx="645.7" cy="83.5" r="4" fill="#66bc5a"/><path d="M642.6 83.5h6.2M645.7 80.4v6.2" stroke="#fff" stroke-width="2"/>
    </svg>
    <!-- row1 -->
    <div class="sep" style="left:42px;top:4px;height:15px"></div>
    <div class="sep" style="left:126px;top:4px;height:15px"></div>
    <div class="sep" style="left:171px;top:4px;height:15px"></div>
    <div class="sep" style="left:255px;top:4px;height:15px"></div>
    <div class="t nar" style="left:281.3px;top:4.8px;font-size:10.5px;transform:scaleX(.894)">Return to Project</div>
    <!-- row2 -->
    <div class="abs" style="left:21px;top:23px;width:168px;height:17.5px;background:#fff;border-top:1px solid #c9c7b5"></div>
    <div class="t nar" style="left:25px;top:27.4px;font-size:10.5px;transform:scaleX(.86)">Arial</div>
    <div class="abs" style="left:179px;top:25px;width:9px;height:16px;background:linear-gradient(#f4f3ea,#d6d4c0)"></div>
    <div class="abs" style="left:181.5px;top:33px;border:2.5px solid transparent;border-top:3px solid #000;width:0;height:0"></div>
    <div class="abs" style="left:192px;top:23px;width:43px;height:17.5px;background:#fff;border-top:1px solid #c9c7b5"></div>
    <div class="t nar" style="left:195px;top:26.4px;font-size:11px;transform:scaleX(.85)">10.5</div>
    <div class="abs" style="left:224px;top:25px;width:10px;height:16px;background:linear-gradient(#f4f3ea,#d6d4c0)"></div>
    <div class="abs" style="left:226.5px;top:33px;border:2.5px solid transparent;border-top:3px solid #000;width:0;height:0"></div>
    <div class="sep" style="left:240px;top:27px;height:15px"></div>
    <div class="t" style="left:249px;top:27.3px;font-size:12px;font-family:'Liberation Serif',serif;font-weight:bold;color:#1a2340">B</div>
    <div class="t" style="left:269.5px;top:27.3px;font-size:12px;font-family:'Liberation Serif',serif;font-weight:bold;font-style:italic;color:#1a2340">I</div>
    <div class="t" style="left:288px;top:27.3px;font-size:12px;font-family:'Liberation Serif',serif;font-weight:bold;color:#1a2340;text-decoration:underline">U</div>
    <div class="sep" style="left:305.5px;top:27px;height:15px"></div>
    <div class="sep" style="left:370px;top:27px;height:15px"></div>
    <!-- right toolbar -->
    <div class="abs" style="left:531px;top:27px;width:2px;height:15px;background:#fff;box-shadow:1px 0 0 #b9b7a3"></div>
    <div class="abs" style="left:537px;top:24px;width:62px;height:14.6px;border:1px solid #cbc9b8;border-radius:2px;background:linear-gradient(#f6f5ee,#e6e5d6)"></div>
    <div class="t nar" style="left:559px;top:27.4px;font-size:10.5px;transform:scaleX(.925)">AVAware</div>
    <div class="sep" style="left:631px;top:27px;height:15px"></div><div class="sep" style="left:605px;top:27px;height:15px;opacity:.6"></div>
    <div class="t nar" style="left:657.5px;top:27.6px;font-size:10.5px;transform:scaleX(.93)">Login</div>
  </div>
  <div id="hdr"><div class="topl"></div><div class="grn"></div>
    <div class="v" style="left:39px"></div><div class="v" style="left:327px"></div><div class="v" style="left:376px"></div><div class="v" style="left:478px"></div><div class="v" style="left:527px"></div><div class="v" style="left:567px"></div><div class="v" style="left:625px"></div>
    <div class="h" style="left:-10px;top:6.3px;width:49px">Comp.<br>Ref.</div>
    <div class="h" style="left:40px;top:13.2px;width:287px">Description</div>
    <div class="h" style="left:328px;top:6.3px;width:48px">Overall<br>Length</div>
    <div class="h" style="left:377px;top:13.2px;width:101px">Price Basis</div>
    <div class="h" style="left:479px;top:6.3px;width:48px">Qty Per<br>Opening</div>
    <div class="h" style="left:528px;top:6.3px;width:39px">Total<br>Qty</div>
    <div class="h" style="left:568px;top:6.3px;width:57px">Opening<br>List</div>
    <div class="h" style="left:626px;top:13.2px;width:64px;text-align:left;padding-left:6px">Total List</div>
  </div>
  <div id="body">
    <div id="yel"></div>
    <div class="vl" style="left:39px"></div><div class="vl" style="left:327px"></div><div class="vl" style="left:376px"></div><div class="vl" style="left:478px"></div><div class="vl" style="left:527px"></div><div class="vl" style="left:567px;background:#e6e2e4"></div><div class="vl" style="left:625px;background:#e6e2e4"></div>
    <div class="hl" style="top:105px"></div><div class="hl" style="top:123px"></div><div class="hl" style="top:245px"></div><div class="hl" style="top:263px"></div>
    <div class="hly" style="top:105px"></div><div class="hly" style="top:123px"></div><div class="hly" style="top:245px"></div><div class="hly" style="top:263px"></div>
    <div class="t r red" style="left:41.8px;top:3.9px">Three-Sided Frame  2000x2000  (BR-S-A60-150-BR1-KD)</div>
    <div class="num red" style="left:484px;width:40px;top:3.9px">1</div>
    <div class="num red" style="left:524px;width:40px;top:3.9px">1</div>
    <div class="t r" style="left:11.8px;top:21.2px">A</div>
    <div class="t r" style="left:55px;top:21.2px">Hinge Jamb  2000  (50x150)</div>
    <div class="t r" style="left:330px;top:21.2px">2000</div>
    <div class="num " style="left:484px;width:40px;top:21.2px">1</div>
    <div class="num " style="left:524px;width:40px;top:21.2px">1</div>
    <div class="t r" style="left:11.8px;top:38.6px">B</div>
    <div class="t r" style="left:55px;top:38.6px">Strike Jamb  2000  (50x150)</div>
    <div class="t r" style="left:330px;top:38.6px">2000</div>
    <div class="num " style="left:484px;width:40px;top:38.6px">1</div>
    <div class="num " style="left:524px;width:40px;top:38.6px">1</div>
    <div class="t r" style="left:11.8px;top:56.0px">C</div>
    <div class="t r" style="left:55px;top:56.0px">Header  2000  (50x150)</div>
    <div class="t r" style="left:330px;top:56.0px">2100</div>
    <div class="num " style="left:484px;width:40px;top:56.0px">1</div>
    <div class="num " style="left:524px;width:40px;top:56.0px">1</div>
    <div class="t r" style="left:41.8px;top:90.7px">Door  2000x2000  (RE-F-A60-1.00-44-HC-LH)</div>
    <div class="t r" style="left:385.8px;top:90.7px">4m² @</div>
    <div class="t r" style="left:460px;top:90.7px">/m²</div>
    <div class="blur" style="left:421px;top:89.7px;width:37px;height:10.5px;background:#c2c2c2"></div>
    <div class="num " style="left:484px;width:40px;top:90.7px">1</div>
    <div class="num " style="left:524px;width:40px;top:90.7px">1</div>
    <div class="blur" style="left:585.5px;top:92.0px;width:23px;height:8.5px"></div>
    <div class="blur" style="left:610.5px;top:92.0px;width:11.5px;height:8.5px"></div>
    <div class="blur" style="left:643px;top:92.0px;width:40px;height:8.5px"></div>
    <div class="blur" style="left:643px;top:109.2px;width:40px;height:8.5px"></div>
    <div class="t r red" style="left:41.8px;top:143.9px">Three-Sided Frame  2000x2000  (BR-S-A60-150-BR1-KD)</div>
    <div class="num red" style="left:484px;width:40px;top:143.9px">1</div>
    <div class="num red" style="left:524px;width:40px;top:143.9px">1</div>
    <div class="t r" style="left:11.8px;top:161.3px">A</div>
    <div class="t r" style="left:55px;top:161.3px">Hinge Jamb  2000  (50x150)</div>
    <div class="t r" style="left:330px;top:161.3px">2000</div>
    <div class="num " style="left:484px;width:40px;top:161.3px">1</div>
    <div class="num " style="left:524px;width:40px;top:161.3px">1</div>
    <div class="t r" style="left:11.8px;top:178.6px">B</div>
    <div class="t r" style="left:55px;top:178.6px">Strike Jamb  2000  (50x150)</div>
    <div class="t r" style="left:330px;top:178.6px">2000</div>
    <div class="num " style="left:484px;width:40px;top:178.6px">1</div>
    <div class="num " style="left:524px;width:40px;top:178.6px">1</div>
    <div class="t r" style="left:11.8px;top:196.0px">C</div>
    <div class="t r" style="left:55px;top:196.0px">Header  2000  (50x150)</div>
    <div class="t r" style="left:330px;top:196.0px">2100</div>
    <div class="num " style="left:484px;width:40px;top:196.0px">1</div>
    <div class="num " style="left:524px;width:40px;top:196.0px">1</div>
    <div class="t r" style="left:41.8px;top:230.7px">Door  2000x2000  (ST-F-A60-1.00-44-STH-LH)</div>
    <div class="t r" style="left:385.8px;top:230.7px">4m² @</div>
    <div class="t r" style="left:460px;top:230.7px">/m²</div>
    <div class="blur" style="left:421px;top:229.7px;width:37px;height:10.5px;background:#c2c2c2"></div>
    <div class="num " style="left:484px;width:40px;top:230.7px">1</div>
    <div class="num " style="left:524px;width:40px;top:230.7px">1</div>
    <div class="blur" style="left:585.5px;top:232.1px;width:23px;height:8.5px"></div>
    <div class="blur" style="left:610.5px;top:232.1px;width:11.5px;height:8.5px"></div>
    <div class="blur" style="left:643px;top:232.1px;width:40px;height:8.5px"></div>
    <div class="blur" style="left:643px;top:249.2px;width:40px;height:8.5px"></div>
    <div class="t" style="left:253.6px;top:283.7px;font-size:10.7px">Project</div>
    <div class="blur" style="left:640px;top:283px;width:40px;height:6px"></div>
  </div>
</div>
<svg id="edge" viewBox="0 0 690 445"><polyline points="23,0 22.7,2.1 23.5,4 21.7,4.5 20.5,4.5 20.3,5.6 19.5,8.5 17.0,10.3 16.0,10.2 16.0,11.7 14.2,12.9 12,14 10.7,14.4 9.0,17.0 7.2,17.9 5.5,18.5 7.1,19.4 8,22 9.5,23.5 9.6,23.7 11,26 12.7,26.9 13,28 12.1,30.1 10.8,31.5 9,32 7.8,34.6 6.9,36.9 6.8,37.2 4.3,39.4 4,42 5.7,43.9 5.8,45.6 6.3,47.8 7,50 8.3,51.8 10.4,54.0 12.2,55.7 14.1,57.4 15,58 16.8,58.3 18.7,60.9 20.3,61.1 21,62 20.4,63.1 19.7,65.5 18,67 16.6,67.5 16.7,70.6 15,71 14.4,73.4 15.3,73.8 15.3,76.8 16,78 17.0,79.1 16.5,82 17.0,83.1 17,86 17.1,87.7 17.1,91.0 16,92 15.2,95.0 14.0,95.2 13.5,98 12.7,98.6 10.9,100.8 10.7,101.8 9.5,104 9.2,106.7 10.4,108.9 12.2,109.8 12,112 12.9,114.0 14.3,116.2 15.1,118.2 16,120 17.9,122.0 17.9,124.4 19,126 16.8,126.8 16.6,128.4 14.1,128.5 12.2,130.8 9.7,132.1 9,133 9.0,134.1 8.8,136.9 8.6,138.7 8,141 8.8,143.3 7.8,143.7 9.6,147.3 9.1,148.1 10,150 9.9,151.6 9.2,153.6 9.0,156.2 9,158 9.1,159.5 10.5,160.6 10.6,163.7 11,165 11.6,166.1 13.6,167.8 13.4,169.9 15.4,170.9 15.6,173.0 17,175 18.7,176.5 19.7,177.7 19.7,180.3 21.8,181.6 21.5,182.6 23,185 21.3,185.4 20.1,187.7 17.1,187.6 16,189 14.8,190.5 13.0,191.1 9.9,192.2 9.4,193.3 7,195 7.5,196.8 8.4,198.8 10.2,200.3 9.2,203.9 11,205 12.8,207.6 12.9,209.2 14.9,209.4 15.5,212.3 16.3,213.4 17,215 18.1,215.9 19.5,216.6 21.7,218.3 23,220 22.3,220.8 21.1,223.7 19,225 19.6,227.5 19.3,228.7 17.3,230.7 18,232 16.1,233.2 15.9,235.2 14.2,237.7 13.4,238.1 12,240 9.9,242.1 8.8,243.4 6.9,243.6 5.7,246.2 4,247 3.3,249.3 4.8,250.9 4,252 6.0,252.3 6.9,255.4 8,256 9.0,256.4 11.3,257.8 13.4,258.5 16.0,258.4 16.4,259.5 18.4,260.3 21,262 21.3,264.4 18.8,265.3 19,267 16.8,267.3 15.0,268.7 13.6,268.9 11.0,269.5 9.0,270.7 8.3,271.0 6,272 6.8,272.4 8.9,274.2 11.4,274.8 13.0,276.2 14,277 15.9,277.4 18.0,278.7 19.8,279.4 21.9,279.2 24.1,280.7 26,281 24.1,282.5 23.9,285.1 23,286 22.4,287.2 20.8,289.6 18.0,290.4 17,292 15.2,294.1 15.3,295.8 14.6,296.8 13,298 14.7,299.9 14.7,301.7 15.8,302.5 18,305 17.4,305.8 14.9,307.5 15.3,309.4 12.4,312.3 11.4,314.0 11,315 12.6,316.9 14.4,317.7 15.3,317.8 16,320 17.5,322.0 18.4,323.2 19.5,326.9 19.1,327.6 21,330 20.9,332.7 20.1,333.4 19.9,336.2 20.7,337.8 20,340 20.7,341.8 21.7,343.8 22.2,346.0 24.9,347.8 25,350 23.7,350.6 21.9,353.0 20.1,353.8 18,355 16.0,356.0 14.8,355.7 11.2,357.6 10.8,357.9 7.9,359.0 5.4,358.8 4,360 5.4,361.2 7.6,361.5 10.4,363.9 12,364 13.4,365.1 15.5,366.0 17.7,365.5 18.8,365.7 21.1,367.1 23,368 21.3,369.7 20.6,372.5 20,374 17.8,376.0 17,376 15.6,377.4 14.1,379.1 13.4,379.7 11.4,381.2 10,382 9.5,383.1 8.0,385.4 6.2,385.2 5,387 4.5,389.4 5.4,391.9 5,393 7.0,393.7 6.9,395.0 8.1,397.2 10,398 12.1,400.2 12.3,401.5 13.8,402.0 16.1,402.8 17,405 16.9,407.7 17.9,408.7 19,411 20.9,412.1 21.5,412.2 24.1,413.2 26,414 27.2,415.4 30.5,416.2 31.5,416.8 32.7,419.1 35,420 36.0,421.5 39.3,420.7 41.1,422.0 42,423 44.3,424.5 45.1,425.4 47.6,426.6 49,427 50.2,428.8 53.3,430.0 54,431 55.8,430.0 57.5,430.2 59.7,430.6 61,430 62.1,428.0 63.3,427.6 64,426 64.9,425.5 67.3,422.7 69.4,421.5 70,421 71.7,421.7 74.2,421.6 76.3,421.7 78,422 79.9,421.6 81.6,422.9 85.3,422.8 87,423 89.5,422.1 90.5,421.6 93.7,420.3 95.0,420.1 97,420 99.0,420.7 100,422 101.3,420.5 103.4,419.9 105,418 106.1,420.1 107.0,420.3 108.4,421.4 111.2,424.1 112,425 113.4,424.9 115.8,426.5 118.6,427.0 120,427 121.8,424.7 123.0,423.2 124.9,422.3 125.8,420.1 128,419 130.6,418.1 132.6,419.8 134.9,418.8 136.1,419.2 138,419 139.7,421.2 141.2,421.0 142.9,422.6 143.8,424.3 145,425 146.0,426.3 149.3,426.6 151.0,427.3 152.4,428.3 155,429 156.2,429.3 159.6,429.5 161.6,430.8 164.4,429.4 166.3,430.7 167.0,430.4 170,431 171.5,430.4 174.1,432.3 175.6,432.3 178.4,431.1 180,432 182.7,431.8 184.9,431.6 186.5,430.5 188.6,431.3 190,430 192.7,429.9 194.5,430.0 195.2,429.1 197.2,429.4 200,430 200.7,428.8 203.2,427.7 204.0,426.7 205.2,425.1 207,424 209.2,424.5 209.7,426.1 212,426 213.9,427.2 214.7,429.1 216.7,429.9 218,432 218.4,430.2 221.4,428.9 222.1,427.8 223.0,426.5 225,426 226.8,425.2 228.1,425.0 230.3,425.7 232.1,424.6 235,425.5 236.9,425.4 239.4,424.8 240.8,425.6 242.1,426.8 245,426 246.7,425.4 249.4,425.8 252.0,426.4 254,427 255.2,426.3 258.5,426.9 260.6,427.4 262,427.6 264.9,427.2 265.5,427.1 268.6,427.9 270,427.6 271.0,426.0 272.6,426 273.2,425.1 273.3,421.3 273.4,420.5 274.7,419.2 277.1,418.6 280,419 281.1,419.4 284.8,418.6 286.9,419.3 288.6,420.2 290,419.5 292.9,418.5 293.6,419.5 296.9,418.4 297.6,419.8 300,419 301.2,418.4 303.7,418.6 306.9,417.1 308.5,417.9 310,417 312.7,417.1 314.8,416.7 315.8,416.5 318,417 320.2,417.0 320.9,416.3 323,417 325.1,418.5 326.8,419.4 328,421 329.7,421.1 331.9,421.5 333.2,423.8 335,424 337.4,423.4 338.5,425.1 341.3,425.4 343.7,424.7 345,425 347.8,425.7 348.7,425.1 350.1,425.4 353.9,425.0 355,426 357.1,425.4 358.2,426.7 360.5,425.7 362.3,427.1 365,427 367.2,426.0 368.5,427.9 370.4,427.1 372.8,427.6 375,427 377.2,427.4 379.1,426.0 380.4,425.6 383.7,425.4 385,426 386.0,427.1 388.4,427.2 390.2,426.5 392.4,427.5 395,427 397.2,426.8 399.5,426.7 400.7,425.7 403,425 404.2,423.2 406.3,423.2 407,422 409.6,421.9 411.1,422.9 413.5,422.7 415,424 416.7,424.2 418.1,424.5 421.5,424.4 423.3,425.0 425,425 426.4,425.1 430.0,425.5 430.9,425.4 432.4,425.9 435,427 437.9,427.7 439.7,428.5 441.2,428.6 443,428 445.1,426.8 447,426 449.9,426.8 451.9,426.0 453.5,425.8 455,426 458.0,427.0 458.6,427.3 460.4,425.8 463.4,426.4 465,427 466.7,427.9 467.4,428.8 470,429 471.6,429.1 473.7,429.9 476.5,429.2 477.2,429.4 480,430 481.8,429.4 483.3,430.9 486.4,431.6 489.0,431.6 490,431 491.7,429.9 493.6,430.1 496.1,429.9 497.7,430.1 500,429 500.8,427.7 503.3,427.1 503.3,424.7 505,424 507.6,423.0 508.3,424.1 511.1,423.3 512.1,423.4 515,424 517.5,423.9 520.0,424.6 522.0,423.1 522.4,423.0 525,424 526.9,423.3 528.1,423.3 530.2,422.4 532.5,423.0 535,422 536.8,421.3 538.1,421.5 541.3,421.8 543.8,421.8 545,421 546.5,420.0 549.5,421.1 551.0,420.9 553,420 554.9,420.6 555.8,421.0 558.5,423.8 560,424 562.2,425.1 563.1,427.3 564.8,427.8 565.4,428.8 567,430 568.3,430.0 571.4,432.2 573.1,431.6 574.7,432.3 577,433 579.6,431.9 581.9,430.3 583,430 584.0,428.6 585.6,427.9 587.9,426.7 588.8,423.5 590,423 591.9,422.3 593.5,421.1 595.7,421.6 597,420 598.2,420.1 600.7,419.6 603.8,420.3 605.3,418.6 607,419 609.8,419.0 610.8,421.0 613,421 614.0,421.7 616.7,424.3 616.8,424.4 618.2,425.1 620,427 621.0,429.0 623,429 623.4,427.0 624.9,425.2 626.8,425.0 628,423 630.3,423.3 632.0,422.0 633,423 633.8,425.7 634.6,426.0 636.7,427.8 638,430 639.3,427.8 640.0,428.4 641.0,427.1 643,425 644.1,425.7 646.8,424.8 647.5,423.4 650,424 652.2,422.7 652.7,423.3 655,422 656.7,419.1 657,418 658.9,416.4 658.8,413.9 660,413 661.5,413.2 663.1,410.8 664.5,410.0 667,410 668.2,409.6 669.2,406.9 672.4,407.2 673,405 675.0,402.7 674.7,402.4 676.0,400.2 677,398 677.0,395.4 677.4,395.2 678,393 677.6,391.5 675.9,389.7 675,388 673.2,387.1 672.3,385.4 670,385 670.9,384.2 672.0,381.0 672,380 672.7,378.7 670.8,375.5 670.7,373.1 671,372 670.7,370.1 669.2,367.7 666.3,367.5 666,365 666.3,364.2 665.9,361.6 665.8,358.9 665,358 666.4,356.2 667.0,354.9 669,353 668.3,351.0 668.1,348.6 668,347 667.2,345.5 668.0,344.4 667.2,342.4 666,340 664.9,339.0 664.2,335.2 664,334 665.5,333.5 666.7,332.3 668.1,331.9 670,330 671.4,329.0 673.1,328.7 675.5,327.1 676,326 673.9,325.2 671.1,323.9 670.7,323.6 668,322 666.1,321.0 665.8,319.6 665,317 666.4,315.1 668.4,315.1 670,313 671.6,312.5 673.9,310.2 674.9,309.3 677,308 676.8,306.0 677.3,305.3 677.2,302.0 677,301 675.4,298.7 675.2,296.3 674,295 672.5,293.0 672.2,290.7 672,290 673.7,289.8 675.4,288.5 677,287 676.9,285.9 676.3,283.4 675.1,281.0 674,280 673.2,278.6 670.8,278.4 668.8,275.8 668.2,275.4 666,274 665.2,271.1 665.7,269.0 666,268 668.3,266.2 668.7,265.4 670.8,264.3 672.7,263.5 674,262 675.1,259.7 677.5,259.4 676.9,257.4 679,256 678.8,255.0 676.8,251.0 677,250 676.0,248.2 675.8,247.5 673.7,245.0 673.2,244.4 672,242 670.2,240.3 668.7,239.3 667.3,238.4 667,236 666.0,234.5 664.2,232.1 664,231 664.9,230.2 666.1,227.6 668.0,226.8 668,225 669.6,223.2 670.6,223.3 671.8,221.3 674,220 672.6,218.4 671.2,218.2 669,216 668.5,215.0 665.9,212.1 665.1,211.1 664,210 663.4,209.0 663.4,207.1 664.9,204.0 664,203 666.6,201.8 667.0,200.4 668.5,200.0 671.0,199.7 673,198 674.7,195.8 674.8,195.1 676,194 673.9,192.5 672.5,192.4 671.2,190.2 670,190 667.9,188.9 667.1,187.5 665.9,186.4 664,186 664.0,184.2 662.7,182.5 663,180 662.5,178.4 662.5,176.9 662,175 662.9,172.4 664.6,172.4 665,170 666.6,169.2 667.7,168.8 670.2,166.4 672.0,167.0 673,165 674.0,164.3 675.6,161.0 677,160 677.2,157.9 677.0,156.7 675.5,154.8 676,153 675.7,151.5 674.1,150.7 672.9,148.5 672,147 671.5,146.0 670.1,142.9 670,142 671.5,140.4 671.6,139.5 673,137 674.4,135.4 675.3,134.3 675,132 675.2,129.8 673.5,128.9 674.7,126.5 674,125 673.7,123.1 673.0,121.4 673.4,118.8 673,117 672.9,115.4 674.0,114.1 675,112 674.0,109.8 673.7,107.8 674,106 674.8,103.2 674.4,102.0 676,100 675.2,98.0 674.8,95.2 675.3,94.8 675,92 676.0,90.3 675.3,87.6 675.3,86.4 676,85 677.1,82.0 677.4,80.5 676.6,77.8 677,76 677.6,73.4 676.5,72.0 676,70 674.1,67.7 674.5,67.1 672.7,65.6 671,63 670.4,61.7 672.0,59.0 671.7,58.7 672,56 672.7,55.2 673.3,53.7 675,52 673.9,50.4 673.4,49.4 673,47 674.0,45.3 674.4,43.4 675.1,41.3 675,40 674.4,38.2 673.4,35.1 673,34 673.0,32.6 673.8,31.2 675,29 674.0,27.9 673,25 672.4,24.2 670.2,21.6 669.4,21.7 668,20 667.2,18.1 664.0,18.3 663,16 664.0,14.0 664,12 662.8,10.3 660.8,10.3 659,9 660.2,7.0 660.3,6.6 662,5 663.1,2.6 661.7,0.8 663,0" fill="none" stroke="#151515" stroke-width="1.25" stroke-linejoin="round"/></svg>
</body></html>
